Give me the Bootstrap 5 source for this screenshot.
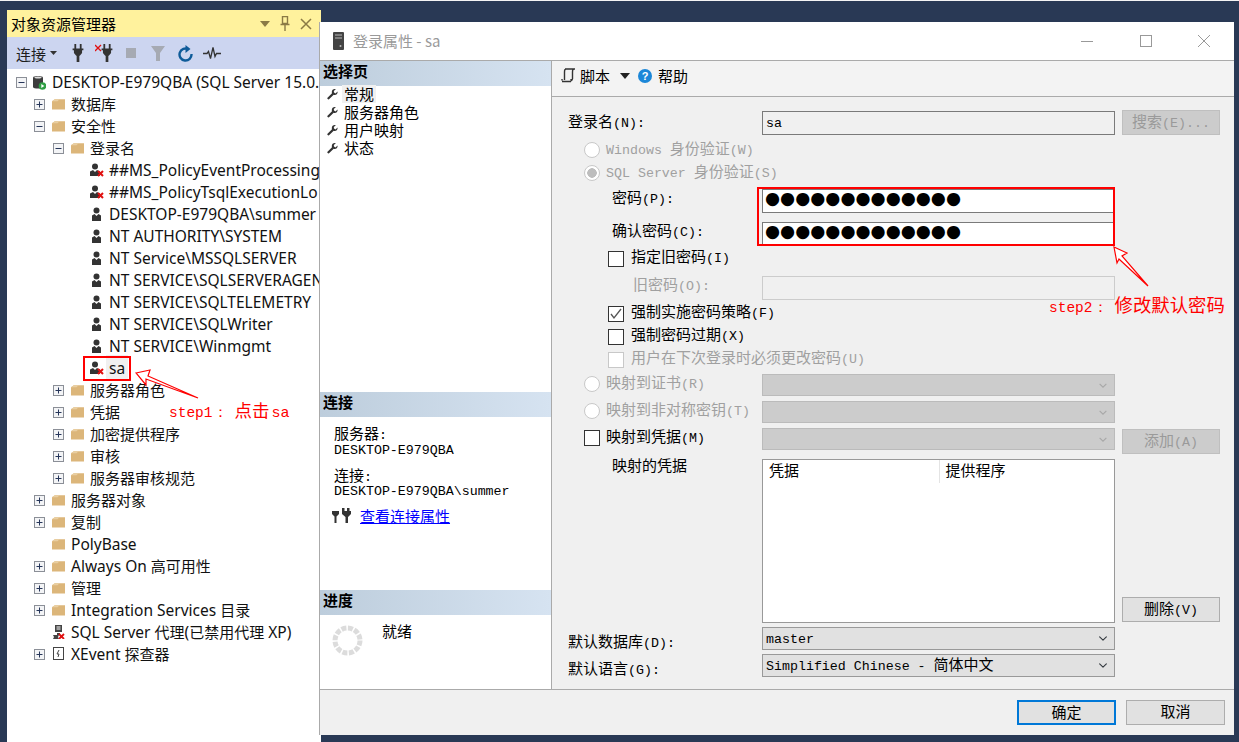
<!DOCTYPE html>
<html lang="zh">
<head>
  <meta charset="UTF-8">
  <title>登录属性 - sa</title>
  <link href="https://cdn.jsdelivr.net/npm/bootstrap@5.3.3/dist/css/bootstrap.min.css" rel="stylesheet">
  <style>
    html, body { margin: 0; height: 100%; }
    body {
      width: 1239px; height: 742px; position: relative; overflow: hidden;
      background: #293955; border-top: 1px solid #f4f4f4;
      font-family: "Liberation Mono", "Noto Sans CJK SC", monospace;
      font-size: 13.3px; color: #000;
    }
    .zh { font-family: "Noto Sans CJK SC", sans-serif; font-size: 15px; line-height: 1; }
    svg { display: block; flex-shrink: 0; }

    /* object explorer window */
    .explorer-win { position: absolute; left: 7px; top: 9px; width: 314px; height: 733px; display: flex; flex-direction: column; background: #fff; }
    .exp-title { height: 27px; background: #fff29d; padding: 0 9px 0 4px; font-size: 15px; }
    .win-ctl { gap: 10px; }
    .exp-tools { height: 32px; background: #ccd5f0; padding-left: 9px; color: #1e1e1e; }
    .tb10 { margin-left: 10px; } .tb11 { margin-left: 11px; } .tb13 { margin-left: 13px; } .tb15 { margin-left: 15px; }
    .tree-pane { padding-top: 2px; font-family: "Noto Sans", "Noto Sans CJK SC", sans-serif; font-size: 15.5px; color: #111; white-space: nowrap; overflow: hidden; }
    .tree-row { height: 22px; display: flex; align-items: center; }
    .tree-row > span:not(.zh):not(.tw-gap) { padding-top: 2px; }
    .tree-row > .zh { padding-bottom: 2px; }
    .lv0 { padding-left: 9px; }
    .lv1 { padding-left: 27px; }
    .lv2 { padding-left: 46px; }
    .lv3 { padding-left: 83px; }
    .tw { width: 11px; height: 11px; margin-right: 7px; }
    .lv0 .tw { margin-right: 6px; }
    .tw-gap { width: 18px; }
    .ico { margin-right: 6px; }
    .lv3 .ico { margin-right: 5px; }
    .tree-row > span.sel-row { background: #f0f0f0; padding: 1px 3px 0; margin-left: -3px; }

    /* login properties dialog */
    .login-dlg { position: absolute; left: 319px; top: 21px; width: 915px; height: 713px; display: flex; flex-direction: column; background: #f0f0f0; border-left: 1px solid #aaa; }
    .dlg-title { height: 38px; background: #fff; color: #9a9a9a; padding-left: 13px; }
    .dlg-title .nm { font-family: "Noto Sans CJK SC", sans-serif; font-size: 15px; margin-left: 9px; }
    .title-btns { gap: 46.5px; padding-right: 24px; }
    .dlg-body { height: 629px; border-top: 1px solid #aaa; display: flex; }
    .pg-pane { width: 232px; background: #fff; border-right: 1px solid #aaa; display: flex; flex-direction: column; flex-shrink: 0; }
    .pg-sec1 { height: 331px; }
    .pg-sec2 { height: 198px; }
    .pg-sec3 { flex-grow: 1; }
    .pg-head { height: 25px; background: linear-gradient(90deg, #bdcddc, #d6e3f1); padding-left: 3px; line-height: 26px; overflow: hidden; }
    .pg-head .zh { font-weight: 700; }
    .pg-sec1 .pg-head { margin-bottom: -1px; }
    .pg-item { height: 18px; display: flex; align-items: center; padding-left: 7px; gap: 6px; }
    .pg-item b { font-weight: 400; padding: 1px 2px; margin-left: -2px; line-height: 16px; }
    .pg-item .cur { background: #f0f0f0; }
    .conn-info { padding: 8px 0 0 14px; line-height: 14.5px; }
    .conn-info p { margin: 0 0 8.5px; }
    .conn-link { margin: -4px 0 0 -2px; height: 22px; gap: 9px; }
    .conn-link a { color: #00f; }
    .prog-row { padding: 10px 0 0 12px; }
    .prog-row .zh { margin: -3px 0 0 19px; line-height: 18px; }

    .form-pane { flex-grow: 1; min-width: 0; }
    .form-tools { height: 36px; background: #f3f3f3; border-bottom: 1px solid #aaa; padding: 0 0 6px 9px; }
    .t-help { margin-left: 6px; }
    .form-rows { padding: 13px 0 0 16px; }
    .frow { display: flex; height: 23px; align-items: center; }
    .frow.tall { height: 24px; }
    .frow.sel { height: 22px; align-items: flex-start; }
    .frow.sel2 { height: 23px; align-items: flex-start; }
    .frow.login-row { height: 25px; }
    .frow.list-row { height: 164px; align-items: flex-end; }
    .lbl { width: 194px; flex-shrink: 0; line-height: 18px; align-self: flex-start; white-space: nowrap; }
    .lbl.in1 { padding-left: 44px; }
    .lbl.in2 { padding-left: 65px; }
    .lbl.short { line-height: 12px; margin-top: -2px; }
    .opt { display: flex; align-items: center; gap: 6px; white-space: nowrap; }
    .opt.o1 { padding-left: 16px; }
    .opt.o2 { padding-left: 40px; gap: 7px; }
    .frow > .opt.o1 > span { padding-top: 2px; }
    .off { color: #a0a0a0; }

    .form-check-input { flex-shrink: 0; width: 16px; height: 16px; margin: 0; background-color: #fff; border: 1px solid #333; opacity: 1 !important; }
    .form-check-input[type=checkbox] { border-radius: 0; }
    .form-check-input:disabled { border-color: #c8c8c8; }
    .form-check-input:checked { background-color: #fff; border-color: #333; }
    .form-check-input[type=checkbox]:checked { background-image: url("data:image/svg+xml,%3csvg xmlns='http://www.w3.org/2000/svg' viewBox='0 0 16 16'%3e%3cpath fill='none' stroke='%23555' stroke-width='1.3' d='M3 8l3 4 7-9'/%3e%3c/svg%3e"); background-size: 16px; }
    .form-check-input[type=radio]:checked:disabled { border-color: #c8c8c8; background-image: radial-gradient(circle, #bdbdbd 0 4.5px, #fff 5px); background-size: auto; }

    .ctl { width: 353px; height: 24px; flex-shrink: 0; }
    .form-control.ctl, .form-select.ctl { border-radius: 0; padding: 0 3px; font: inherit; line-height: 23px; color: #000; box-shadow: none; }
    .form-control.ctl { border: 1px solid #7a7a7a; background: #fff; line-height: 21px; }
    .form-control.name-box { background: #f0f0f0; margin-top: 1px; }
    .form-control.ctl:disabled { background: #f0f0f0; border-color: #ccc; }
    .form-control.dots { font-family: "DejaVu Sans", sans-serif; font-size: 17.3px; line-height: 16px; padding: 0 0 6px 2px; }
    .form-select.ctl { background-color: #e1e1e1; border: 1px solid #999; background-position: right 5px center; background-size: 12px 9px; height: 23px; }
    .form-select.dead { background-color: #ccc; border-color: #bbb; height: 22px; background-image: url("data:image/svg+xml,%3csvg xmlns='http://www.w3.org/2000/svg' viewBox='0 0 16 16'%3e%3cpath fill='none' stroke='%23a8a8a8' stroke-width='2' d='m2 5 6 6 6-6'/%3e%3c/svg%3e"); }
    .cred-list { width: 353px; height: 164px; border: 1px solid #999; background: #fff; flex-shrink: 0; }
    .cred-head { height: 23px; }
    .cred-head div { width: 176px; padding-left: 6px; line-height: 25px; }
    .cred-head div + div { border-left: 1px solid #e4e4e4; }
    .side-btn { margin-left: 7px; flex-shrink: 0; }
    .side-btn.low { margin-bottom: 1px; }
    .btn.win-btn { width: 98px; height: 25px; padding: 2px 0 0; border-radius: 0; border: 1px solid #adadad; background: #e1e1e1; color: #000; font: inherit; line-height: 20px; }
    .btn.win-btn:disabled { background: #ccc; border-color: #bfbfbf; color: #9a9a9a; opacity: 1; }
    .btn.win-btn.pri { border: 2px solid #0078d7; }
    .dlg-foot { height: 46px; border-top: 1px solid #aaa; padding: 10px 9px 0 0; gap: 10px; }
    .dlg-foot .win-btn.btn { width: 99px; }

    .mt1p { margin-top: 1px; } .mt2p { margin-top: 2px; } .mt3p { margin-top: 3px; }
    .mt4p { margin-top: 4px; } .mt5p { margin-top: 5px; } .mt6p { margin-top: 6px; }
    .mt9p { margin-top: 9px; }

    /* annotations on top of the screenshot */
    .mark-box { position: absolute; border: 2px solid #f00; z-index: 5; }
    .mark-sa { left: 83px; top: 355px; width: 48px; height: 25px; }
    .mark-pw { left: 757px; top: 186px; width: 358px; height: 59px; }
    .mark-arrows { position: absolute; left: 0; top: -1px; z-index: 6; pointer-events: none; }
    .mark-note { position: absolute; z-index: 6; color: #f00; font-family: "Liberation Mono", monospace; font-size: 14.5px; line-height: 22px; white-space: nowrap; }
    .mark-note .zh { font-size: 17.5px; }
    .mark-note.note2 .zh { font-size: 18.4px; }
    .mark-note .colon { margin-right: 7px; }
    .mark-note .tail { font-size: 15px; margin-left: 2px; }
    .note1 { left: 169px; top: 400px; }
    .note2 { left: 1049px; top: 294px; }
  </style>
</head>
<body>
  <svg width="0" height="0" class="position-absolute">
    <defs>
      <symbol id="i-plus" viewBox="0 0 11 11"><rect x=".5" y=".5" width="10" height="10" fill="#f3f4f6" stroke="#8b8f97"/><path d="M2.500 5.500h6M5.500 2.500v6" stroke="#26365a"/></symbol>
      <symbol id="i-minus" viewBox="0 0 11 11"><rect x=".5" y=".5" width="10" height="10" fill="#f3f4f6" stroke="#8b8f97"/><path d="M2.500 5.500h6" stroke="#26365a"/></symbol>
      <symbol id="i-folder" viewBox="0 0 14 12"><path d="M0 3 3 1h11v11H0z" fill="#dcb67a"/><path d="M3 1 0 3h6l2-2z" fill="#e9cfa2"/></symbol>
      <symbol id="i-user" viewBox="0 0 14 14"><circle cx="6.500" cy="3.500" r="3" fill="#333"/><path d="M2 14V8.500L4.500 7 6.500 9 8.500 7 11 8.500V14z" fill="#333"/></symbol>
      <symbol id="i-userx" viewBox="0 0 14 14"><circle cx="5" cy="3.500" r="3" fill="#333"/><path d="M0 13V8.500L3 7 5 9 7 7 10 8.500V13z" fill="#333"/><path d="M8 8l5 5M13 8l-5 5" stroke="#e01010" stroke-width="2"/></symbol>
      <symbol id="i-wrench" viewBox="0 0 11 11"><path d="M10.500 2.500 8.500 4.500 7 3.500 6.800 2 8.800.3C6.800-.4 4.800 1 4.800 3c0 .5.100.9.200 1.300L.5 8.800c-.7.800.7 2.200 1.500 1.500L6.700 5.800c.3.100.7.200 1.100.2 1.800 0 3.200-1.600 2.700-3.500z" fill="#333"/></symbol>
      <symbol id="i-plug" viewBox="0 0 12 20"><path d="M2 0h2v5H2zM8 0h2v5H8zM0 5h12v2H10.500v3l-2.500 3H7.500v7h-3v-7H4L1.500 10V7H0z" fill="#333"/></symbol>
    </defs>
  </svg>

  <!-- object explorer -->
  <div class="explorer-win">
    <div class="exp-title d-flex align-items-center justify-content-between">
      <span class="zh">对象资源管理器</span>
      <span class="win-ctl d-flex align-items-center">
        <svg width="10" height="6" viewBox="0 0 10 6"><path d="M0 0h10L5 6z" fill="#8b7a45"/></svg>
        <svg width="10" height="15" viewBox="0 0 10 15"><path d="M2.500.5h5v7h-5zM.5 8.500h9M5 8.500V15" fill="none" stroke="#8b7a45" stroke-width="1.400"/></svg>
        <svg width="12" height="12" viewBox="0 0 12 12"><path d="M1 1l10 10M11 1 1 11" stroke="#8b7a45" stroke-width="1.500"/></svg>
      </span>
    </div>
    <div class="exp-tools d-flex align-items-center">
      <span class="zh">连接</span>
      <svg class="ms-1" width="7" height="4" viewBox="0 0 7 4"><path d="M0 0h7L3.500 4z" fill="#333"/></svg>
      <svg class="tb15" width="12" height="18"><use href="#i-plug"/></svg>
      <svg class="tb11" width="18" height="18" viewBox="0 0 18 18"><path d="M0 1l6 6M6 1 0 7" stroke="#e01010" stroke-width="1.300"/><svg x="6" width="12" height="18"><use href="#i-plug"/></svg></svg>
      <svg class="tb13" width="10" height="10"><rect width="10" height="10" fill="#a6aab3"/></svg>
      <svg class="tb15" width="14" height="15" viewBox="0 0 14 15"><path d="M0 0h14L9 7v8H5V7z" fill="#a6aab3"/></svg>
      <svg class="tb13" width="15" height="17" viewBox="0 0 15 17"><path d="M10.500 4.300A6 6 0 1 0 13.500 9" fill="none" stroke="#0e5b99" stroke-width="2.400"/><path d="M7.500 0v8l5-4z" fill="#0e5b99"/></svg>
      <svg class="tb10" width="18" height="12" viewBox="0 0 18 12"><path d="M0 6.500h4l1.500-2 2 7L10 .5l2 9 1.500-3H18" fill="none" stroke="#333" stroke-width="1.300"/></svg>
    </div>
    <div class="tree-pane flex-grow-1">
      <div class="tree-row lv0"><svg class="tw"><use href="#i-minus"/></svg><svg class="ico" width="13" height="15" viewBox="0 0 13 15"><path d="M0 2.500C0 .5 10 .5 10 2.500V12c0 2-10 2-10 0z" fill="#3d3d3d"/><ellipse cx="5" cy="2.500" rx="3.500" ry="1" fill="#ddd"/><circle cx="9.500" cy="11" r="3.800" fill="#2f9e44"/><path d="M8.300 9v4l3-2z" fill="#fff"/></svg><span>DESKTOP-E979QBA (SQL Server 15.0.</span></div>
      <div class="tree-row lv1"><svg class="tw"><use href="#i-plus"/></svg><svg class="ico" width="13" height="12"><use href="#i-folder"/></svg><span class="zh">数据库</span></div>
      <div class="tree-row lv1"><svg class="tw"><use href="#i-minus"/></svg><svg class="ico" width="13" height="12"><use href="#i-folder"/></svg><span class="zh">安全性</span></div>
      <div class="tree-row lv2"><svg class="tw"><use href="#i-minus"/></svg><svg class="ico" width="13" height="12"><use href="#i-folder"/></svg><span class="zh">登录名</span></div>
      <div class="tree-row lv3"><svg class="ico" width="14" height="14"><use href="#i-userx"/></svg><span>##MS_PolicyEventProcessing</span></div>
      <div class="tree-row lv3"><svg class="ico" width="14" height="14"><use href="#i-userx"/></svg><span>##MS_PolicyTsqlExecutionLo</span></div>
      <div class="tree-row lv3"><svg class="ico" width="14" height="14"><use href="#i-user"/></svg><span>DESKTOP-E979QBA\summer</span></div>
      <div class="tree-row lv3"><svg class="ico" width="14" height="14"><use href="#i-user"/></svg><span>NT AUTHORITY\SYSTEM</span></div>
      <div class="tree-row lv3"><svg class="ico" width="14" height="14"><use href="#i-user"/></svg><span>NT Service\MSSQLSERVER</span></div>
      <div class="tree-row lv3"><svg class="ico" width="14" height="14"><use href="#i-user"/></svg><span>NT SERVICE\SQLSERVERAGEN</span></div>
      <div class="tree-row lv3"><svg class="ico" width="14" height="14"><use href="#i-user"/></svg><span>NT SERVICE\SQLTELEMETRY</span></div>
      <div class="tree-row lv3"><svg class="ico" width="14" height="14"><use href="#i-user"/></svg><span>NT SERVICE\SQLWriter</span></div>
      <div class="tree-row lv3"><svg class="ico" width="14" height="14"><use href="#i-user"/></svg><span>NT SERVICE\Winmgmt</span></div>
      <div class="tree-row lv3"><svg class="ico" width="14" height="14"><use href="#i-userx"/></svg><span class="sel-row">sa</span></div>
      <div class="tree-row lv2"><svg class="tw"><use href="#i-plus"/></svg><svg class="ico" width="13" height="12"><use href="#i-folder"/></svg><span class="zh">服务器角色</span></div>
      <div class="tree-row lv2"><svg class="tw"><use href="#i-plus"/></svg><svg class="ico" width="13" height="12"><use href="#i-folder"/></svg><span class="zh">凭据</span></div>
      <div class="tree-row lv2"><svg class="tw"><use href="#i-plus"/></svg><svg class="ico" width="13" height="12"><use href="#i-folder"/></svg><span class="zh">加密提供程序</span></div>
      <div class="tree-row lv2"><svg class="tw"><use href="#i-plus"/></svg><svg class="ico" width="13" height="12"><use href="#i-folder"/></svg><span class="zh">审核</span></div>
      <div class="tree-row lv2"><svg class="tw"><use href="#i-plus"/></svg><svg class="ico" width="13" height="12"><use href="#i-folder"/></svg><span class="zh">服务器审核规范</span></div>
      <div class="tree-row lv1"><svg class="tw"><use href="#i-plus"/></svg><svg class="ico" width="13" height="12"><use href="#i-folder"/></svg><span class="zh">服务器对象</span></div>
      <div class="tree-row lv1"><svg class="tw"><use href="#i-plus"/></svg><svg class="ico" width="13" height="12"><use href="#i-folder"/></svg><span class="zh">复制</span></div>
      <div class="tree-row lv1"><span class="tw-gap"></span><svg class="ico" width="13" height="12"><use href="#i-folder"/></svg><span>PolyBase</span></div>
      <div class="tree-row lv1"><svg class="tw"><use href="#i-plus"/></svg><svg class="ico" width="13" height="12"><use href="#i-folder"/></svg><span>Always On <span class="zh">高可用性</span></span></div>
      <div class="tree-row lv1"><svg class="tw"><use href="#i-plus"/></svg><svg class="ico" width="13" height="12"><use href="#i-folder"/></svg><span class="zh">管理</span></div>
      <div class="tree-row lv1"><svg class="tw"><use href="#i-plus"/></svg><svg class="ico" width="13" height="12"><use href="#i-folder"/></svg><span>Integration Services <span class="zh">目录</span></span></div>
      <div class="tree-row lv1"><span class="tw-gap"></span><svg class="ico" width="13" height="14" viewBox="0 0 13 14"><path d="M3 0h7v7H3zM1 10h4V8h3v2h-1l-1 2 1 2H1l1-2z" fill="#444"/><path d="M7 9l5 5M12 9l-5 5" stroke="#e01010" stroke-width="1.800"/><path d="M4.500 2h4M4.500 4h4" stroke="#fff"/></svg><span>SQL Server <span class="zh">代理</span>(<span class="zh">已禁用代理</span> XP)</span></div>
      <div class="tree-row lv1"><svg class="tw"><use href="#i-plus"/></svg><svg class="ico" width="13" height="14" viewBox="0 0 13 14"><rect x="1.500" y=".5" width="10" height="12" fill="#fff" stroke="#444"/><path d="M7 3 5 7h2l-1 3" fill="none" stroke="#444"/></svg><span>XEvent <span class="zh">探查器</span></span></div>
    </div>
  </div>

  <!-- login properties dialog -->
  <div class="login-dlg">
    <div class="dlg-title d-flex align-items-center flex-shrink-0">
      <svg width="11" height="18" viewBox="0 0 11 18"><rect width="11" height="18" rx="1" fill="#444"/><path d="M2 3h7M2 6h7" stroke="#bbb"/><circle cx="7.500" cy="14" r="1" fill="#bbb"/></svg>
      <span class="nm">登录属性 - sa</span>
      <span class="title-btns d-flex align-items-center ms-auto">
        <svg width="12" height="12" viewBox="0 0 12 12"><path d="M0 6.500h12" stroke="#999"/></svg>
        <svg width="12" height="12" viewBox="0 0 12 12"><rect x=".5" y=".5" width="11" height="11" fill="none" stroke="#999"/></svg>
        <svg width="12" height="12" viewBox="0 0 12 12"><path d="M0 0l12 12M12 0 0 12" stroke="#999"/></svg>
      </span>
    </div>
    <div class="dlg-body">
      <div class="pg-pane">
        <div class="pg-sec1">
          <div class="pg-head"><span class="zh">选择页</span></div>
          <div class="pg-item"><svg width="11" height="11"><use href="#i-wrench"/></svg><b class="zh cur">常规</b></div>
          <div class="pg-item"><svg width="11" height="11"><use href="#i-wrench"/></svg><b class="zh">服务器角色</b></div>
          <div class="pg-item"><svg width="11" height="11"><use href="#i-wrench"/></svg><b class="zh">用户映射</b></div>
          <div class="pg-item"><svg width="11" height="11"><use href="#i-wrench"/></svg><b class="zh">状态</b></div>
        </div>
        <div class="pg-sec2">
          <div class="pg-head"><span class="zh">连接</span></div>
          <div class="conn-info">
            <p><span class="zh">服务器</span>:<br>DESKTOP-E979QBA</p>
            <p><span class="zh">连接</span>:<br>DESKTOP-E979QBA\summer</p>
            <div class="conn-link d-flex align-items-center">
              <svg width="19" height="15" viewBox="0 0 19 15"><path d="M0 3h7v3L4.500 8.500V15h-2V8.500L0 6z" fill="#333"/><path d="M10 0h2.500v3H15V0h2.500v3H19v3l-3 3v6h-2.500V9L10 6z" fill="#333"/></svg>
              <a href="#" class="zh">查看连接属性</a>
            </div>
          </div>
        </div>
        <div class="pg-sec3">
          <div class="pg-head"><span class="zh">进度</span></div>
          <div class="prog-row d-flex align-items-start">
            <svg width="31" height="31" viewBox="0 0 31 31"><circle cx="15.500" cy="15.500" r="12.500" fill="none" stroke="#dcdcdc" stroke-width="5" stroke-dasharray="5 1.550"/></svg>
            <span class="zh">就绪</span>
          </div>
        </div>
      </div>
      <div class="form-pane">
        <div class="form-tools d-flex align-items-center">
          <svg width="15" height="15" viewBox="0 0 15 15"><path d="M4 1h10M5 1C3.500 1 3.500 3 3.500 4v8M13 1c-1 0-1.500 1-1.500 3v7M1 13.500h9M1 11v1.500M10 11c0 2 .5 2.500 1.500 0" fill="none" stroke="#333" stroke-width="1.400"/></svg>
          <span class="zh ms-1">脚本</span>
          <svg class="tb10" width="10" height="6" viewBox="0 0 10 6"><path d="M0 0h10L5 6z" fill="#222"/></svg>
          <svg class="ms-2" width="14" height="14" viewBox="0 0 14 14"><circle cx="7" cy="7" r="7" fill="#1c87d8"/><text x="7" y="11" text-anchor="middle" fill="#fff" font-family="Liberation Sans" font-weight="700" font-size="11">?</text></svg>
          <span class="zh t-help">帮助</span>
        </div>
        <div class="form-rows">
          <div class="frow login-row">
            <div class="lbl mt3p"><span class="zh">登录名</span>(N):</div>
            <input class="form-control ctl name-box" value="sa" readonly>
            <button class="btn win-btn side-btn" disabled><span class="zh">搜索</span>(E)...</button>
          </div>
          <div class="frow mt3p off"><div class="opt o1"><input class="form-check-input" type="radio" name="auth" disabled><span>Windows <span class="zh">身份验证</span>(W)</span></div></div>
          <div class="frow off"><div class="opt o1"><input class="form-check-input" type="radio" name="auth" checked disabled><span>SQL Server <span class="zh">身份验证</span>(S)</span></div></div>
          <div class="frow tall mt5p">
            <div class="lbl in1"><span class="zh">密码</span>(P):</div>
            <input class="form-control ctl dots" value="●●●●●●●●●●●●●" readonly>
          </div>
          <div class="frow tall mt9p">
            <div class="lbl in1"><span class="zh">确认密码</span>(C):</div>
            <input class="form-control ctl dots" value="●●●●●●●●●●●●●" readonly>
          </div>
          <div class="frow mt1p"><div class="opt o2"><input class="form-check-input" type="checkbox"><span><span class="zh">指定旧密码</span>(I)</span></div></div>
          <div class="frow tall mt6p off">
            <div class="lbl in2"><span class="zh">旧密码</span>(O):</div>
            <input class="form-control ctl" disabled>
          </div>
          <div class="frow mt2p"><div class="opt o2"><input class="form-check-input" type="checkbox" checked><span><span class="zh">强制实施密码策略</span>(F)</span></div></div>
          <div class="frow"><div class="opt o2"><input class="form-check-input" type="checkbox"><span><span class="zh">强制密码过期</span>(X)</span></div></div>
          <div class="frow off"><div class="opt o2"><input class="form-check-input" type="checkbox" disabled><span><span class="zh">用户在下次登录时必须更改密码</span>(U)</span></div></div>
          <div class="frow sel mt3p off">
            <div class="lbl"><div class="opt o1"><input class="form-check-input" type="radio" disabled><span><span class="zh">映射到证书</span>(R)</span></div></div>
            <div class="form-select ctl dead"></div>
          </div>
          <div class="frow sel mt5p off">
            <div class="lbl"><div class="opt o1"><input class="form-check-input" type="radio" disabled><span><span class="zh">映射到非对称密钥</span>(T)</span></div></div>
            <div class="form-select ctl dead"></div>
          </div>
          <div class="frow sel mt5p">
            <div class="lbl"><div class="opt o1"><input class="form-check-input" type="checkbox"><span><span class="zh">映射到凭据</span>(M)</span></div></div>
            <div class="form-select ctl dead"></div>
            <button class="btn win-btn side-btn mt1p" disabled><span class="zh">添加</span>(A)</button>
          </div>
          <div class="frow list-row mt9p">
            <div class="lbl in1 short"><span class="zh">映射的凭据</span></div>
            <div class="cred-list">
              <div class="cred-head d-flex"><div><span class="zh">凭据</span></div><div><span class="zh">提供程序</span></div></div>
            </div>
            <button class="btn win-btn side-btn low"><span class="zh">删除</span>(V)</button>
          </div>
          <div class="frow sel2 mt4p">
            <div class="lbl mt6p"><span class="zh">默认数据库</span>(D):</div>
            <div class="form-select ctl">master</div>
          </div>
          <div class="frow sel2 mt4p">
            <div class="lbl mt6p"><span class="zh">默认语言</span>(G):</div>
            <div class="form-select ctl">Simplified Chinese - <span class="zh">简体中文</span></div>
          </div>
        </div>
      </div>
    </div>
    <div class="dlg-foot d-flex justify-content-end align-items-start flex-shrink-0">
      <button class="btn win-btn pri"><span class="zh">确定</span></button>
      <button class="btn win-btn"><span class="zh">取消</span></button>
    </div>
  </div>

  <!-- red notes -->
  <div class="mark-box mark-sa"></div>
  <div class="mark-box mark-pw"></div>
  <svg class="mark-arrows" width="1239" height="742" viewBox="0 0 1239 742">
    <polygon points="136,373 150,370 148,376 198,398 146,379 146,385" fill="#fff" stroke="#f00" stroke-width="1.200"/>
    <polygon points="1114,247 1127,253 1122,256 1148,286 1119,259 1117,263" fill="#fff" stroke="#f00" stroke-width="1.200"/>
  </svg>
  <div class="mark-note note1">step1<span class="colon">：</span><span class="zh">点击</span><span class="tail">sa</span></div>
  <div class="mark-note note2">step2<span class="colon">：</span><span class="zh">修改默认密码</span></div>

  <script src="https://cdn.jsdelivr.net/npm/bootstrap@5.3.3/dist/js/bootstrap.bundle.min.js"></script>
</body>
</html>
